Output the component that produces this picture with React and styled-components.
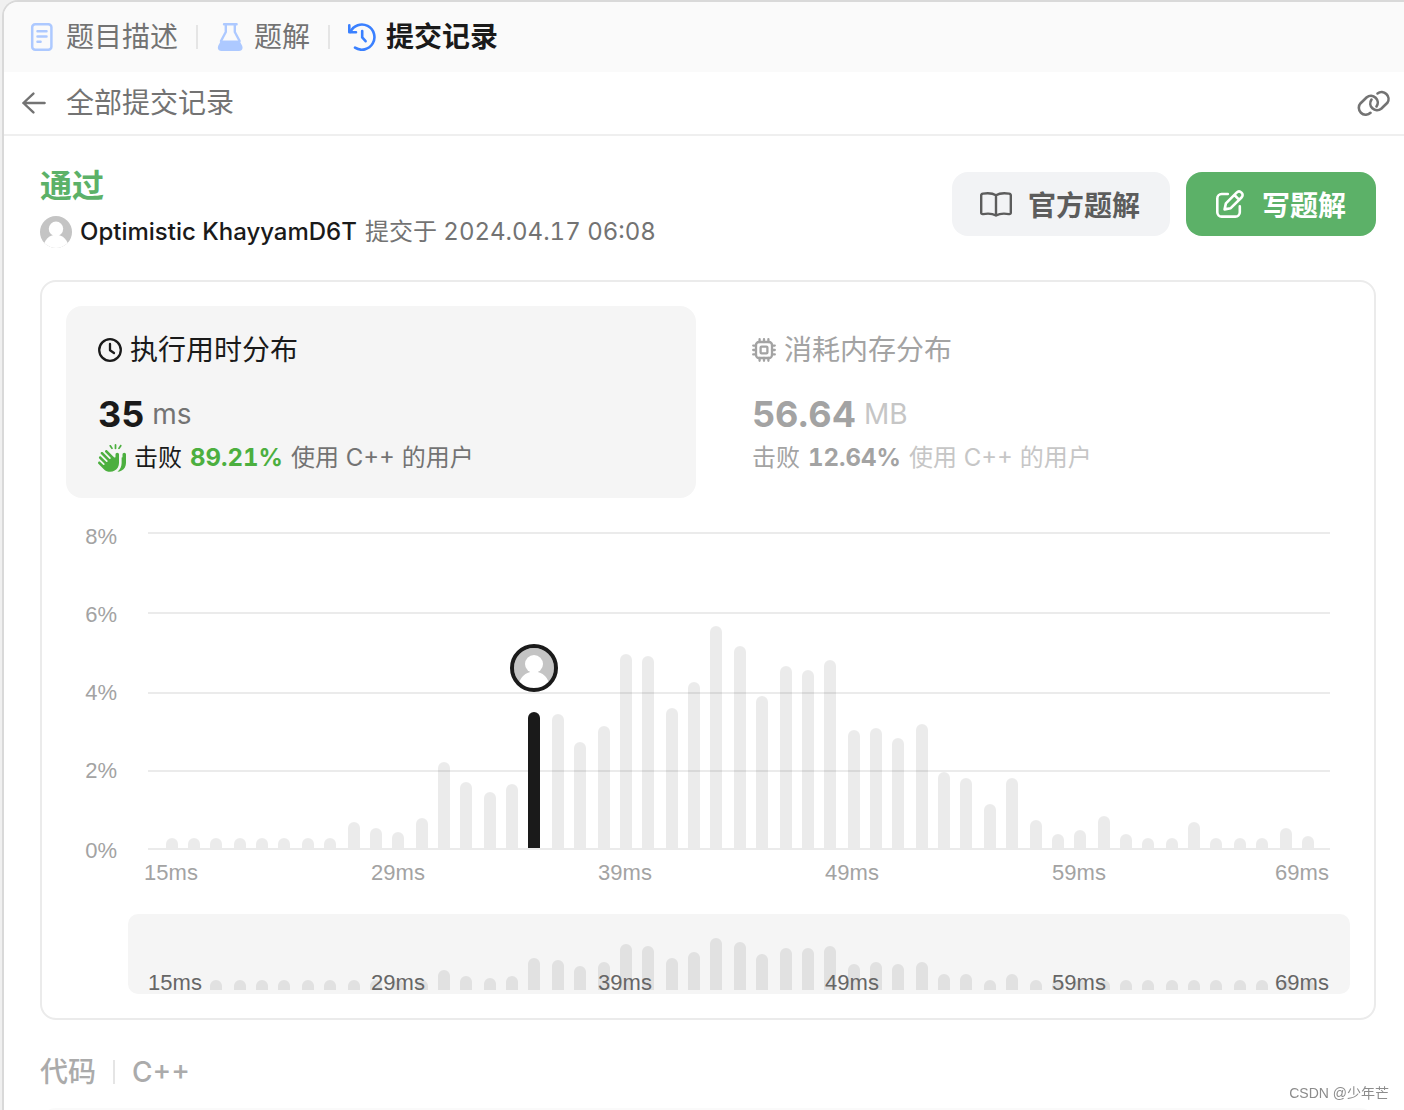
import { FaHandsClapping } from 'react-icons/fa6';
import styled, { createGlobalStyle } from 'styled-components';

const GlobalStyle = createGlobalStyle`
  * {
    box-sizing: border-box;
  }

  body {
    margin: 0;
    background: #f0f0f0;
    font-family: Inter, "Noto Sans CJK SC", sans-serif;
    color: #1a1a1a;
  }

  button {
    margin: 0;
    padding: 0;
    border: 0;
    background: none;
    font: inherit;
    color: inherit;
    text-align: left;
    cursor: pointer;
  }

  svg {
    display: block;
    flex-shrink: 0;
  }
`;

const Panel = styled.div`
  height: 100vh;
  margin-left: 2px;
  overflow: hidden;
  background: #fff;
  border: 2px solid #d9d9d9;
  border-right: 0;
  border-bottom: 0;
  border-top-left-radius: 16px;
`;

const TabBar = styled.nav`
  display: flex;
  align-items: center;
  gap: 18px;
  height: 70px;
  padding: 0 24px;
  background: #fafafa;
`;

const Tab = styled.button`
  display: flex;
  align-items: center;
  gap: 10px;
  font-size: 28px;
  line-height: 40px;
  font-weight: ${(p) => (p.$active ? 600 : 400)};
  color: ${(p) => (p.$active ? '#1a1a1a' : '#737373')};

  svg {
    color: ${(p) => (p.$active ? '#3a80ff' : '#adc9ff')};
  }
`;

const Divider = styled.span`
  width: 2px;
  height: 24px;
  background: #e5e5e5;
`;

const BackBar = styled.div`
  display: flex;
  align-items: center;
  justify-content: space-between;
  height: 64px;
  padding: 0 13px 0 18px;
  border-bottom: 2px solid #efefef;
  color: #737373;
`;

const BackButton = styled.button`
  display: flex;
  align-items: center;
  gap: 20px;
  font-size: 28px;
  line-height: 40px;
`;

const Content = styled.main`
  padding: 28px 28px 0 36px;
`;

const ResultHeader = styled.header`
  display: flex;
  align-items: flex-start;
  justify-content: space-between;
  margin-bottom: 32px;
`;

const Status = styled.h1`
  margin: 0 0 8px;
  font-size: 32px;
  line-height: 44px;
  font-weight: 600;
  color: #5cb168;
`;

const Submitter = styled.div`
  display: flex;
  align-items: center;
  gap: 8px;
  font-size: 24px;
  line-height: 32px;
  color: #737373;
`;

const UserName = styled.span`
  font-weight: 500;
  color: #1a1a1a;
`;

const SubmittedAt = styled.span`
  font-variant-numeric: tabular-nums;
`;

const Actions = styled.div`
  display: flex;
  gap: 16px;
  padding-top: 8px;
`;

const ActionButton = styled.button`
  display: flex;
  align-items: center;
  gap: 16px;
  height: 64px;
  padding: 0 30px 0 28px;
  border-radius: 16px;
  font-size: 28px;
  font-weight: 600;
  color: ${(p) => (p.$primary ? '#fff' : '#5c5c5c')};
  background: ${(p) => (p.$primary ? '#5cb168' : '#f2f3f5')};
`;

const Card = styled.section`
  padding: 24px;
  border: 2px solid #ebebeb;
  border-radius: 16px;
`;

const Stats = styled.div`
  display: grid;
  grid-template-columns: 1fr 1fr;
  gap: 24px;
`;

const Stat = styled.button`
  padding: 24px 32px;
  border-radius: 16px;
  background: ${(p) => (p.$active ? '#f5f5f5' : 'transparent')};
  color: ${(p) => (p.$active ? '#1a1a1a' : '#a3a3a3')};
`;

const StatTitle = styled.div`
  display: flex;
  align-items: center;
  gap: 8px;
  margin-bottom: 22px;
  font-size: 28px;
  line-height: 40px;
`;

const StatValue = styled.div`
  display: flex;
  align-items: center;
  gap: 8px;
  margin-bottom: 6px;
  font-size: 36px;
  line-height: 44px;
  font-weight: 700;
`;

const Unit = styled.span`
  font-size: 28px;
  font-weight: 400;
  color: ${(p) => (p.$active ? '#737373' : '#c6c6c6')};
`;

const StatRank = styled.div`
  display: flex;
  align-items: center;
  gap: 8px;
  font-size: 24px;
  line-height: 32px;
`;

const Percent = styled.span`
  font-weight: 700;
  font-variant-numeric: tabular-nums;
  color: ${(p) => (p.$active ? '#4caf3f' : 'inherit')};
`;

const Muted = styled.span`
  color: ${(p) => (p.$active ? '#737373' : '#c6c6c6')};
`;

const Chart = styled.svg`
  width: 100%;
  height: auto;
  font-family: "Liberation Sans", Arial, sans-serif;
  font-size: 22px;
`;

const CodeHeader = styled.div`
  display: flex;
  align-items: center;
  gap: 17px;
  margin: 32px 0 16px;
  font-size: 28px;
  line-height: 40px;
  font-weight: 500;
  color: #ababab;
`;

const CodeBlock = styled.div`
  height: 64px;
  border-radius: 16px;
  background: #fafafa;
`;

const Watermark = styled.div`
  position: fixed;
  right: 15px;
  bottom: 6px;
  font-family: "Liberation Sans", "Noto Sans CJK SC", sans-serif;
  font-size: 14px;
  line-height: 22px;
  color: #8c8c8c;
`;

const stroke = {
  fill: 'none',
  stroke: 'currentColor',
  strokeLinecap: 'round',
  strokeLinejoin: 'round',
};

const NoteIcon = () => (
  <svg width="28" height="28" viewBox="0 0 28 28" strokeWidth="2.5" {...stroke}>
    <rect x="4.2" y="1.3" width="19.2" height="25.4" rx="3" />
    <path d="M9.5 8.3H18.5M9.5 13.4H18.5M9.5 18.7H12.6" />
  </svg>
);

const FlaskIcon = () => (
  <svg width="28" height="28" viewBox="0 0 28 28" strokeWidth="2.4" {...stroke}>
    <path d="M8 1.3H20.6M9.8 1.5V9L5 18M18.8 1.5V9L23.6 18" />
    <path
      d="M5 17.5H23.4L26 22.6C27.4 25.6 26 28 23.2 28H5.2C2.4 28 1 25.6 2.4 22.6Z"
      fill="currentColor"
      stroke="none"
    />
  </svg>
);

const HistoryIcon = () => (
  <svg width="28" height="28" viewBox="0 0 28 28" strokeWidth="2.6" {...stroke}>
    <path d="M1.3 2.4V9.2H8" />
    <path d="M2.4 8.8A12.6 12.6 0 1 1 7 24.7" />
    <path d="M14.2 8V14.4L17.6 18.2" />
  </svg>
);

const BackIcon = () => (
  <svg width="24" height="22" viewBox="0 0 24 22" strokeWidth="2.4" {...stroke}>
    <path d="M22.6 11H1.4M11.4 1.6L1.4 11L11.4 20.4" />
  </svg>
);

const LinkIcon = () => (
  <svg width="34" height="26" viewBox="0 0 34 26" strokeWidth="2.6" {...stroke}>
    <path d="M13.5 22.8A6.9 6.9 0 0 1 3.6 13.2L9.8 7.2A6.8 6.8 0 0 1 19.5 16.5" />
    <path d="M20.5 3.5A6.9 6.9 0 0 1 30.4 12.8L24.2 18.8A6.8 6.8 0 0 1 14.5 9.5" />
  </svg>
);

const BookIcon = () => (
  <svg width="32" height="25" viewBox="0 0 32 25" strokeWidth="2.4" {...stroke}>
    <path d="M16 3.2C12.5 1 7 1 3 1.6C1.8 1.8 1.2 2.4 1.2 3.4V20.7C1.2 21.8 2 22.3 3 22.1C7.5 21.3 12.5 21.5 16 23.5C19.5 21.5 24.5 21.3 29 22.1C30 22.3 30.8 21.8 30.8 20.7V3.4C30.8 2.4 30.2 1.8 29 1.6C25 1 19.5 1 16 3.2V23.2" />
  </svg>
);

const PenIcon = () => (
  <svg width="32" height="28" viewBox="-2 0 32 28" strokeWidth="2.6" {...stroke}>
    <path d="M11.8 4H5.6A4.4 4.4 0 0 0 1.3 8.4V22.2A4.4 4.4 0 0 0 5.6 26.6H19.4A4.4 4.4 0 0 0 23.8 22.2V16.4" />
    <path d="M8.6 19.4L9.9 13.4L20.6 2.6C22 1.2 24 1.2 25.5 2.6C27 4.1 27 6.1 25.5 7.5L14.7 18.2ZM18.4 5L23 9.6" />
  </svg>
);

const ClockIcon = () => (
  <svg width="24" height="24" viewBox="0 0 24 24" strokeWidth="2.3" {...stroke}>
    <circle cx="12" cy="12" r="10.8" />
    <path d="M12 6V12.2L16 15" />
  </svg>
);

const ChipIcon = () => (
  <svg width="24" height="24" viewBox="0 0 24 24" strokeWidth="2.3" {...stroke}>
    <rect x="4" y="4" width="16" height="16" rx="3" />
    <rect x="8.6" y="8.6" width="6.8" height="6.8" rx="1" />
    <path d="M7.6 1.2V4M12 1.2V4M16.4 1.2V4M7.6 20V22.8M12 20V22.8M16.4 20V22.8M1.2 7.6H4M1.2 12H4M1.2 16.4H4M20 7.6H22.8M20 12H22.8M20 16.4H22.8" />
  </svg>
);

const Avatar = ({ size, x, y }) => (
  <svg width={size} height={size} x={x} y={y} viewBox="0 0 40 40">
    <clipPath id={`avatar-${size}`}>
      <circle cx="20" cy="20" r="20" />
    </clipPath>
    <g clipPath={`url(#avatar-${size})`}>
      <path d="M0 0H40V40H0Z" fill="#c4c4c4" />
      <circle cx="20" cy="16" r="9" fill="#fff" />
      <circle cx="20" cy="39" r="15.5" fill="#fff" />
    </g>
  </svg>
);

const gridLines = [
  { label: '8%', y: 35, textY: 46 },
  { label: '6%', y: 115, textY: 124 },
  { label: '4%', y: 195, textY: 202 },
  { label: '2%', y: 273, textY: 280 },
  { label: '0%', y: 351, textY: 360 },
];

const ticks = [
  { label: '15ms', x: 105, overviewX: 109 },
  { label: '29ms', x: 332 },
  { label: '39ms', x: 559 },
  { label: '49ms', x: 786 },
  { label: '59ms', x: 1013 },
  { label: '69ms', x: 1236 },
];

const bars = [
  10, 10, 10, 10, 10, 10, 10, 10, 26, 20, 16, 30, 86, 66, 56, 64, 136, 134,
  106, 122, 194, 192, 140, 166, 222, 202, 152, 182, 178, 188, 118, 120, 110,
  124, 76, 70, 44, 70, 28, 14, 18, 32, 14, 10, 10, 26, 10, 10, 10, 20, 12,
];

const overviewBars = [
  0, 0, 10, 10, 10, 10, 10, 10, 10, 10, 10, 10, 20, 14, 12, 14, 32, 30, 24, 28,
  46, 44, 32, 38, 52, 48, 36, 42, 42, 44, 26, 28, 26, 28, 16, 16, 10, 16, 10,
  10, 10, 10, 10, 10, 10, 10, 10, 10, 10, 10, 10,
];

const CURRENT = 16;

const barX = (i) => Math.floor((100.24 + i * 22.732) / 2) * 2;

const barPath = (i, base, height) =>
  `M${barX(i)} ${base}v${6 - height}a6 6 0 0 1 12 0v${height - 6}z`;

const Distribution = () => (
  <Chart viewBox="0 0 1284 496" role="img" aria-label="执行用时分布">
    {gridLines.map((line) => (
      <g key={line.label}>
        <rect x="82" y={line.y - 1} width="1182" height="2" fill="#ebebeb" />
        <text x="51" y={line.textY} textAnchor="end" fill="#a3a3a3">
          {line.label}
        </text>
      </g>
    ))}
    {bars.map((height, i) => (
      <path
        key={i}
        d={barPath(i, 350, height)}
        fill={i === CURRENT ? '#1a1a1a' : 'rgba(0, 0, 0, 0.08)'}
      />
    ))}
    <Avatar size={40} x={448} y={150} />
    <circle cx="468" cy="170" r="22" fill="none" stroke="#1a1a1a" strokeWidth="4" />
    {ticks.map((tick) => (
      <text key={tick.label} x={tick.x} y="382" textAnchor="middle" fill="#a3a3a3">
        {tick.label}
      </text>
    ))}

    <rect x="62" y="416" width="1222" height="80" rx="10" fill="#f5f5f5" />
    {overviewBars.map(
      (height, i) =>
        height > 0 && <path key={i} d={barPath(i, 492, height)} fill="#e1e1e1" />
    )}
    {ticks.map((tick) => (
      <text
        key={tick.label}
        x={tick.overviewX || tick.x}
        y="492"
        textAnchor="middle"
        fill="#666"
      >
        {tick.label}
      </text>
    ))}
  </Chart>
);

const App = () => {
  return (
    <>
      <GlobalStyle />
      <Panel>
        <TabBar>
          <Tab>
            <NoteIcon />
            题目描述
          </Tab>
          <Divider />
          <Tab>
            <FlaskIcon />
            题解
          </Tab>
          <Divider />
          <Tab $active>
            <HistoryIcon />
            提交记录
          </Tab>
        </TabBar>
        <BackBar>
          <BackButton>
            <BackIcon />
            全部提交记录
          </BackButton>
          <button aria-label="复制链接">
            <LinkIcon />
          </button>
        </BackBar>
        <Content>
          <ResultHeader>
            <div>
              <Status>通过</Status>
              <Submitter>
                <Avatar size={32} />
                <UserName>Optimistic KhayyamD6T</UserName>
                <SubmittedAt>提交于 2024.04.17 06:08</SubmittedAt>
              </Submitter>
            </div>
            <Actions>
              <ActionButton>
                <BookIcon />
                官方题解
              </ActionButton>
              <ActionButton $primary>
                <PenIcon />
                写题解
              </ActionButton>
            </Actions>
          </ResultHeader>
          <Card>
            <Stats>
              <Stat $active>
                <StatTitle>
                  <ClockIcon />
                  执行用时分布
                </StatTitle>
                <StatValue>
                  35<Unit $active>ms</Unit>
                </StatValue>
                <StatRank>
                  <FaHandsClapping size={28} color="#4caf3f" />
                  <span>击败</span>
                  <Percent $active>89.21%</Percent>
                  <Muted $active>使用 C++ 的用户</Muted>
                </StatRank>
              </Stat>
              <Stat>
                <StatTitle>
                  <ChipIcon />
                  消耗内存分布
                </StatTitle>
                <StatValue>
                  56.64<Unit>MB</Unit>
                </StatValue>
                <StatRank>
                  <span>击败</span>
                  <Percent>12.64%</Percent>
                  <Muted>使用 C++ 的用户</Muted>
                </StatRank>
              </Stat>
            </Stats>
            <Distribution />
          </Card>
          <CodeHeader>
            代码
            <Divider />
            C++
          </CodeHeader>
          <CodeBlock />
        </Content>
      </Panel>
      <Watermark>CSDN @少年芒</Watermark>
    </>
  );
};

export default App;
